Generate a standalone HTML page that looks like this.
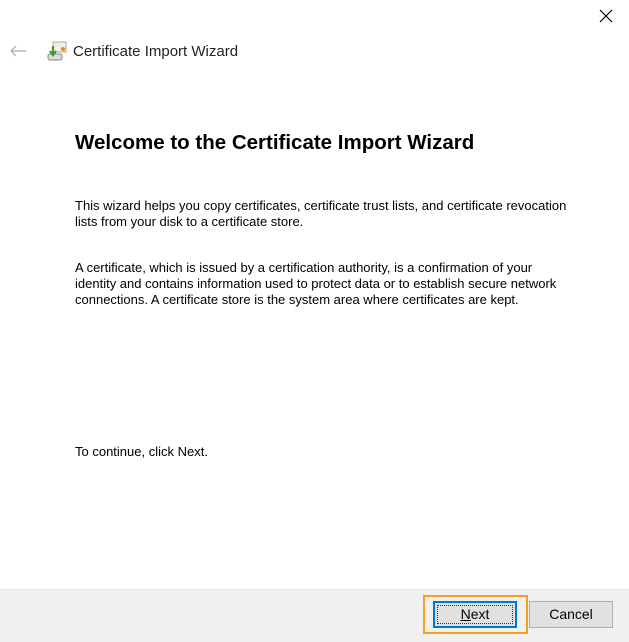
<!DOCTYPE html>
<html><head><style>
body{margin:0;width:629px;height:641px;background:#fff;font-family:"Liberation Sans",sans-serif;position:relative;overflow:hidden;color:#000}
.a{position:absolute}
p{position:absolute;margin:0;left:75px;font-size:13px;line-height:16px;width:560px;white-space:nowrap}
</style></head><body>
<svg class="a" style="left:598px;top:8px" width="16" height="16"><path d="M2 2L14 14M14 2L2 14" stroke="#000" stroke-width="1.2"/></svg>
<svg class="a" style="left:9px;top:44px" width="18" height="14"><path d="M2 7H17M2 7L7 2M2 7L7 12" stroke="#aaa" stroke-width="1.2" fill="none"/></svg>
<svg class="a" style="left:46px;top:41px" width="22" height="22">
<rect x="7" y="1" width="13" height="10" fill="#f4efe0" stroke="#b8a88a"/>
<circle cx="17" cy="8" r="2" fill="#e08a20"/>
<rect x="2" y="13" width="14" height="6" rx="2" fill="#ddd" stroke="#888"/>
<path d="M7 5V13M4 10L7 14L10 10" stroke="#3a9a2a" stroke-width="2.2" fill="none"/>
</svg>
<div class="a" style="left:73px;top:43px;font-size:15px;color:#222">Certificate Import Wizard</div>
<div class="a" style="left:75px;top:131px;font-size:20.5px;font-weight:bold">Welcome to the Certificate Import Wizard</div>
<p style="top:198px">This wizard helps you copy certificates, certificate trust lists, and certificate revocation<br>lists from your disk to a certificate store.</p>
<p style="top:260px">A certificate, which is issued by a certification authority, is a confirmation of your<br>identity and contains information used to protect data or to establish secure network<br>connections. A certificate store is the system area where certificates are kept.</p>
<p style="top:444px">To continue, click Next.</p>
<div class="a" style="left:0;top:589px;width:629px;height:52px;background:#f0f0f0;border-top:1px solid #e3e3e3"></div>
<div class="a" style="left:423px;top:595px;width:101px;height:35px;border:2px solid #f5a020"></div>
<div class="a" style="left:433px;top:601px;width:80px;height:23px;border:2px solid #0078d7;background:#e1e1e1;font-size:14px;line-height:23px;text-align:center"><div style="position:absolute;inset:2px;border:1px dotted #333"></div><u>N</u>ext</div>
<div class="a" style="left:529px;top:601px;width:82px;height:25px;border:1px solid #adadad;background:#e1e1e1;font-size:14px;line-height:25px;text-align:center">Cancel</div>
</body></html>
